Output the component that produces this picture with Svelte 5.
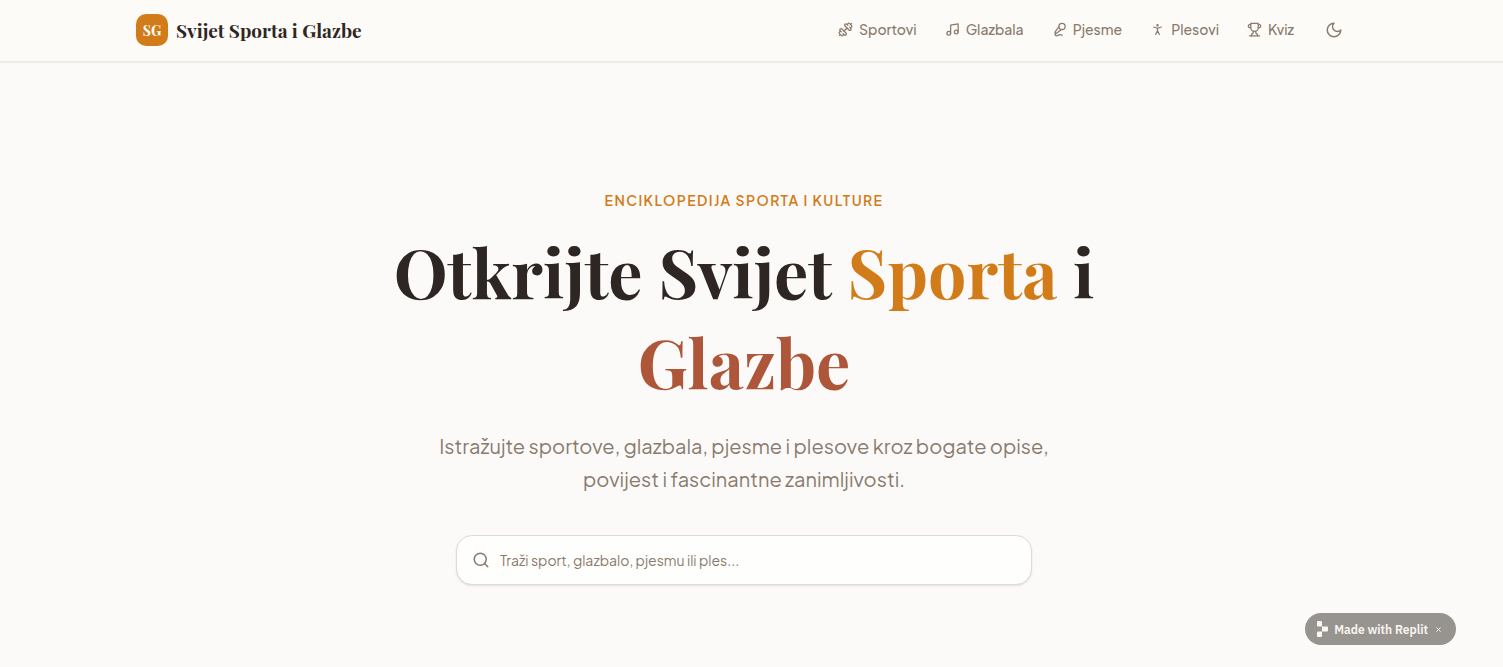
<script lang="ts">
  type Shape = { d?: string; circle?: [number, number, number] }
  type NavItem = { label: string; href: string; icon: Shape[] }

  const navItems: NavItem[] = [
    {
      label: 'Sportovi',
      href: '#sportovi',
      icon: [
        { d: 'M17.596 12.768a2 2 0 1 0 2.829-2.829l-1.768-1.767a2 2 0 0 0 2.828-2.829l-2.828-2.828a2 2 0 0 0-2.829 2.828l-1.767-1.768a2 2 0 1 0-2.829 2.829z' },
        { d: 'm2.5 21.5 1.4-1.4' },
        { d: 'm20.1 3.9 1.4-1.4' },
        { d: 'M5.343 21.485a2 2 0 1 0 2.829-2.828l1.767 1.768a2 2 0 1 0 2.829-2.829l-6.364-6.364a2 2 0 1 0-2.829 2.829l1.768 1.767a2 2 0 0 0-2.828 2.829z' },
        { d: 'm9.6 14.4 4.8-4.8' },
      ],
    },
    {
      label: 'Glazbala',
      href: '#glazbala',
      icon: [{ d: 'M9 18V5l12-2v13' }, { circle: [6, 18, 3] }, { circle: [18, 16, 3] }],
    },
    {
      label: 'Pjesme',
      href: '#pjesme',
      icon: [
        { d: 'm11 7.601-5.994 8.19a1 1 0 0 0 .1 1.298l.817.818a1 1 0 0 0 1.314.087L15.09 12' },
        { d: 'M16.5 21.174C15.5 20.5 14.372 20 13 20c-2.058 0-3.928 2.356-6 2-2.072-.356-2.775-3.369-1.5-4.5' },
        { circle: [16, 7, 5] },
      ],
    },
    {
      label: 'Plesovi',
      href: '#plesovi',
      icon: [{ circle: [12, 5, 1] }, { d: 'm9 20 3-6 3 6' }, { d: 'm6 8 6 2 6-2' }, { d: 'M12 10v4' }],
    },
    {
      label: 'Kviz',
      href: '#kviz',
      icon: [
        { d: 'M6 9H4.5a2.5 2.5 0 0 1 0-5H6' },
        { d: 'M18 9h1.5a2.5 2.5 0 0 0 0-5H18' },
        { d: 'M4 22h16' },
        { d: 'M10 14.66V17c0 .55-.47.98-.97 1.21C7.85 18.75 7 20.24 7 22' },
        { d: 'M14 14.66V17c0 .55.47.98.97 1.21C16.15 18.75 17 20.24 17 22' },
        { d: 'M18 2H6v7a6 6 0 0 0 12 0V2Z' },
      ],
    },
  ]

  const moon: Shape[] = [{ d: 'M12 3a6 6 0 0 0 9 9 9 9 0 1 1-9-9Z' }]
  const magnifier: Shape[] = [{ circle: [11, 11, 8] }, { d: 'm21 21-4.3-4.3' }]

  let query = $state('')
  let showBadge = $state(true)
</script>

{#snippet icon(shapes: Shape[], size: number)}
  <svg
    class="icon"
    width={size}
    height={size}
    viewBox="0 0 24 24"
    fill="none"
    stroke="currentColor"
    stroke-width="2"
    stroke-linecap="round"
    stroke-linejoin="round"
    aria-hidden="true"
  >
    {#each shapes as shape}
      {#if shape.circle}
        <circle cx={shape.circle[0]} cy={shape.circle[1]} r={shape.circle[2]} />
      {:else}
        <path d={shape.d} />
      {/if}
    {/each}
  </svg>
{/snippet}

<div class="page">
  <header class="header">
    <div class="header-inner">
      <a class="brand" href="#top">
        <span class="brand-mark">SG</span>
        <span class="brand-name">Svijet Sporta i Glazbe</span>
      </a>
      <div class="header-right">
        <nav class="nav">
          {#each navItems as item}
            <a class="nav-link" href={item.href}>
              {@render icon(item.icon, 15)}
              <span>{item.label}</span>
            </a>
          {/each}
        </nav>
        <button class="theme-toggle" type="button" aria-label="Tamni način">
          {@render icon(moon, 18)}
        </button>
      </div>
    </div>
  </header>

  <main class="hero">
    <p class="eyebrow">Enciklopedija sporta i kulture</p>
    <h1 class="title">
      Otkrijte Svijet <span class="sport">Sporta</span> i <span class="music">Glazbe</span>
    </h1>
    <p class="lead">
      Istražujte sportove, glazbala, pjesme i plesove kroz bogate opise, povijest i fascinantne zanimljivosti.
    </p>
    <form class="search" role="search" onsubmit={(e) => e.preventDefault()}>
      {@render icon(magnifier, 18)}
      <input
        class="search-input"
        type="search"
        placeholder="Traži sport, glazbalo, pjesmu ili ples..."
        aria-label="Traži"
        bind:value={query}
      />
    </form>
  </main>
</div>

{#if showBadge}
  <div class="badge">
    <a class="badge-link" href="#replit">
      <svg width="12" height="16" viewBox="0 0 12 16" fill="currentColor" aria-hidden="true">
        <path d="M2 0h3a1 1 0 0 1 1 1v4.4H2a1 1 0 0 1-1-1V1a1 1 0 0 1 1-1z" />
        <path d="M6 5.4h5a1 1 0 0 1 1 1v3.2a1 1 0 0 1-1 1H6z" />
        <path d="M2 10.6h4V15a1 1 0 0 1-1 1H2a1 1 0 0 1-1-1v-3.4a1 1 0 0 1 1-1z" />
      </svg>
      <span>Made with Replit</span>
    </a>
    <button class="badge-close" type="button" aria-label="Zatvori" onclick={() => (showBadge = false)}>
      <svg width="5" height="5" viewBox="0 0 5 5" stroke="currentColor" aria-hidden="true">
        <path d="M.5.5l4 4M4.5.5l-4 4" />
      </svg>
    </button>
  </div>
{/if}

<style>
  :global(body) {
    --bg: #fcfaf8;
    --header-bg: #fcfbf7;
    --line: #efece8;
    --text: #2e2622;
    --muted: #8a7a6e;
    --primary: #d17c18;
    --rust: #ad5639;
    --serif: 'Playfair Display', 'Liberation Serif', serif;
    --sans: 'Plus Jakarta Sans', 'Inter', sans-serif;

    background: var(--bg);
    color: var(--text);
    font-family: var(--sans);
  }

  .icon {
    flex-shrink: 0;
  }

  /* Header */
  .header {
    padding-right: 15px;
    background: var(--header-bg);
    border-bottom: 2px solid var(--line);
  }

  .header-inner {
    display: flex;
    align-items: center;
    justify-content: space-between;
    box-sizing: border-box;
    max-width: 1280px;
    margin: 0 auto;
    padding: 12px 32px 13px;
  }

  .brand {
    display: flex;
    align-items: center;
    gap: 8px;
    color: var(--text);
    text-decoration: none;
  }

  .brand-mark {
    display: flex;
    align-items: center;
    justify-content: center;
    width: 32px;
    height: 32px;
    border-radius: 10px;
    background: var(--primary);
    color: #fff;
    font-family: var(--serif);
    font-size: 14px;
    font-weight: 700;
  }

  .brand-name {
    font-family: var(--serif);
    font-size: 19px;
    font-weight: 700;
    line-height: 28px;
  }

  .header-right {
    display: flex;
    align-items: center;
    gap: 10px;
  }

  .nav {
    display: flex;
    gap: 4px;
  }

  .nav-link {
    display: flex;
    align-items: center;
    gap: 6px;
    padding: 7px 12px 9px;
    color: var(--muted);
    font-size: 14px;
    font-weight: 500;
    line-height: 20px;
    text-decoration: none;
  }

  .theme-toggle {
    display: flex;
    align-items: center;
    justify-content: center;
    width: 36px;
    height: 36px;
    padding: 0;
    border: none;
    background: none;
    color: var(--muted);
    cursor: pointer;
  }

  /* Hero */
  .hero {
    display: flex;
    flex-direction: column;
    align-items: center;
    padding: 127px 47px 80px 32px;
    text-align: center;
  }

  .eyebrow {
    margin: 0 0 16px;
    color: var(--primary);
    font-size: 14px;
    font-weight: 600;
    line-height: 20px;
    letter-spacing: 0.1em;
    text-transform: uppercase;
  }

  .title {
    max-width: 720px;
    margin: 0 0 23px;
    font-family: var(--serif);
    font-size: 68px;
    font-weight: 700;
    line-height: 90px;
  }

  .sport {
    color: var(--primary);
  }

  .music {
    color: var(--rust);
  }

  .lead {
    max-width: 672px;
    margin: 0 0 40px;
    color: var(--muted);
    font-size: 20px;
    line-height: 33px;
  }

  .search {
    display: flex;
    align-items: center;
    gap: 10px;
    box-sizing: border-box;
    width: 100%;
    max-width: 576px;
    padding: 0 15px;
    border: 1px solid #e2dad3;
    border-radius: 16px;
    background: #fefefc;
    box-shadow: 0 1px 2px rgb(80 50 30 / 0.14);
    color: var(--muted);
  }

  .search-input {
    flex: 1;
    min-width: 0;
    height: 48px;
    padding: 0;
    border: none;
    outline: none;
    background: none;
    color: var(--text);
    font-family: var(--sans);
    font-size: 14px;
  }

  .search-input::placeholder {
    color: var(--muted);
    opacity: 1;
  }

  /* Floating badge */
  .badge {
    position: fixed;
    right: 47px;
    bottom: 22px;
    display: flex;
    align-items: center;
    gap: 8px;
    height: 32px;
    padding: 0 15px 0 11px;
    border-radius: 16px;
    background: #979490;
    color: #fbf6f0;
  }

  .badge-link {
    display: flex;
    align-items: center;
    gap: 6px;
    color: inherit;
    font-family: 'IBM Plex Sans', 'Noto Sans', sans-serif;
    font-size: 12px;
    font-weight: 600;
    text-decoration: none;
  }

  .badge-close {
    display: flex;
    padding: 0;
    border: none;
    background: none;
    color: inherit;
    cursor: pointer;
  }
</style>
